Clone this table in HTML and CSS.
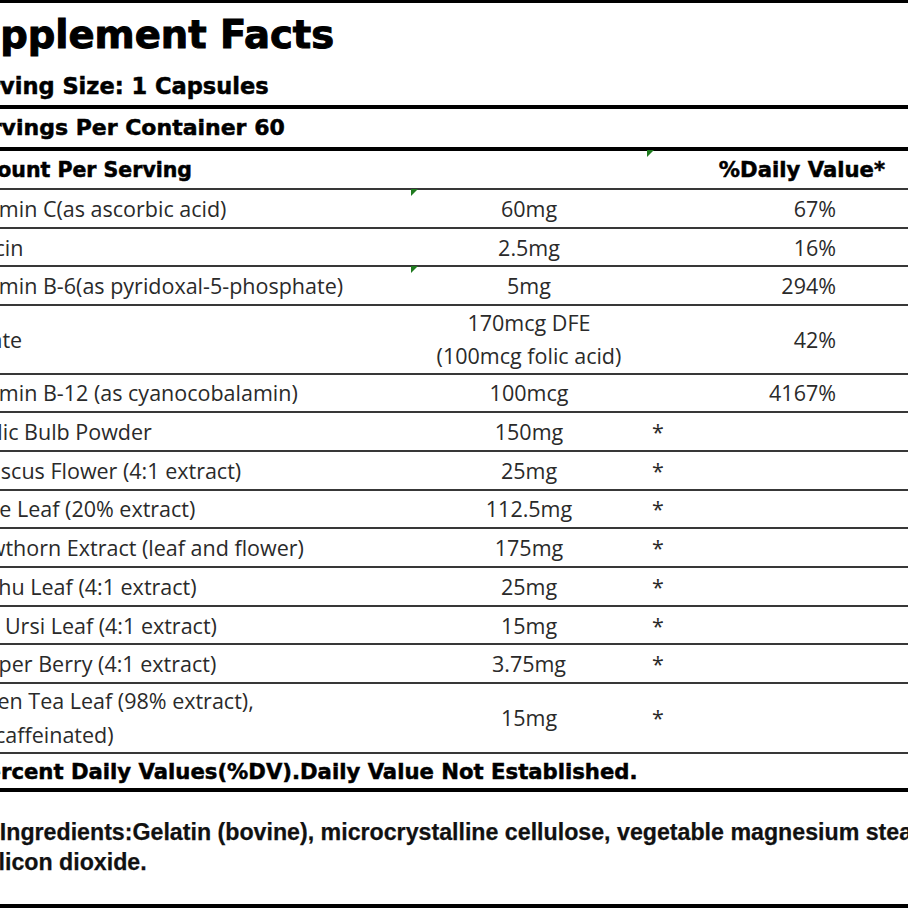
FILE: index.html
```html
<!DOCTYPE html>
<html lang="en">
<head>
<meta charset="utf-8">
<title>Supplement Facts</title>
<link rel="stylesheet" href="styles.css">
</head>
<body>
<div class="label">
  <div class="top">
    <h1 class="title">Supplement Facts</h1>
    <p class="serving">Serving Size: 1 Capsules</p>
  </div>
  <p class="servings">Servings Per Container 60</p>
  <div class="row head">
    <span class="name">Amount Per Serving</span>
    <span class="amt"></span>
    <span class="dvh"><i class="flag"></i>%Daily Value*</span>
  </div>
  <div class="row"><span class="name">Vitamin C(as ascorbic acid)</span><span class="amt"><i class="flag"></i>60mg</span><span class="dv">67%</span></div>
  <div class="row"><span class="name">Niacin</span><span class="amt">2.5mg</span><span class="dv">16%</span></div>
  <div class="row"><span class="name">Vitamin B-6(as pyridoxal-5-phosphate)</span><span class="amt"><i class="flag"></i>5mg</span><span class="dv">294%</span></div>
  <div class="row tall folate"><span class="name">Folate</span><span class="amt">170mcg DFE<br>(100mcg folic acid)</span><span class="dv">42%</span></div>
  <div class="row"><span class="name">Vitamin B-12 (as cyanocobalamin)</span><span class="amt">100mcg</span><span class="dv">4167%</span></div>
  <div class="row"><span class="name">Garlic Bulb Powder</span><span class="amt">150mg</span><span class="star">*</span></div>
  <div class="row"><span class="name">Hibiscus Flower (4:1 extract)</span><span class="amt">25mg</span><span class="star">*</span></div>
  <div class="row"><span class="name">Olive Leaf (20% extract)</span><span class="amt">112.5mg</span><span class="star">*</span></div>
  <div class="row"><span class="name">Hawthorn Extract (leaf and flower)</span><span class="amt">175mg</span><span class="star">*</span></div>
  <div class="row"><span class="name">Buchu Leaf (4:1 extract)</span><span class="amt">25mg</span><span class="star">*</span></div>
  <div class="row"><span class="name">Uva Ursi Leaf (4:1 extract)</span><span class="amt">15mg</span><span class="star">*</span></div>
  <div class="row"><span class="name">Juniper Berry (4:1 extract)</span><span class="amt">3.75mg</span><span class="star">*</span></div>
  <div class="row tall tea"><span class="name">Green Tea Leaf (98% extract),<br>(Decaffeinated)</span><span class="amt">15mg</span><span class="star">*</span></div>
  <p class="footnote">*Percent Daily Values(%DV).Daily Value Not Established.</p>
  <div class="ingredients">
    <p>Other Ingredients:Gelatin (bovine), microcrystalline cellulose, vegetable magnesium stearate and silicon dioxide.</p>
  </div>
</div>
</body>
</html>
```

FILE: styles.css
```css
html, body {
  margin: 0;
  padding: 0;
  background: #ffffff;
}

body {
  width: 908px;
  height: 908px;
  overflow: hidden;
}

.label {
  width: 990px;
  margin-left: -40px;
  border-top: 3px solid #000;
  border-bottom: 4px solid #000;
  font-family: "DejaVu Sans", "Liberation Sans", sans-serif;
  color: #000;
}

.top {
  padding: 10px 0 6px;
  border-bottom: 4px solid #000;
}

.title {
  margin: 0 0 0 -15px;
  font-size: 38.5px;
  line-height: 44px;
  font-weight: 700;
  -webkit-text-stroke: 1px #000;
}

.serving {
  margin: 16px 0 0 -2.5px;
  font-size: 22.5px;
  line-height: 26px;
  font-weight: 700;
  -webkit-text-stroke: 0.5px #000;
}

.servings {
  margin: 0;
  padding: 6px 0;
  font-size: 22px;
  line-height: 26px;
  font-weight: 700;
  border-bottom: 4px solid #000;
  -webkit-text-stroke: 0.5px #000;
}

.row {
  display: grid;
  grid-template-columns: 451px 236px 1fr;
  height: 36.7px;
  border-bottom: 2px solid #383838;
  font-family: "Open Sans", "Noto Sans", sans-serif;
  font-size: 21.5px;
  color: #2a2a2a;
}

.row > span {
  position: relative;
  display: flex;
  align-items: center;
}

.name {
  padding-left: 1px;
  white-space: nowrap;
}

.amt {
  justify-content: center;
  text-align: center;
}

.dv {
  justify-content: flex-end;
  padding-right: 114px;
}

.star {
  padding-left: 5px;
}

.tall.folate {
  height: 66.5px;
  line-height: 33px;
}

.tall.tea {
  height: 68px;
  line-height: 34px;
}

.row.head {
  height: 37px;
  font-family: "DejaVu Sans", "Liberation Sans", sans-serif;
  font-size: 20.5px;
  font-weight: 700;
  color: #000;
  -webkit-text-stroke: 0.5px #000;
}

.row.head > span {
  align-items: flex-start;
  padding-top: 6px;
  line-height: 26px;
}

.row.head .name {
  padding-left: 0;
}

.dvh {
  justify-content: flex-end;
  padding-right: 65px;
  font-size: 21.2px;
}

.flag {
  position: absolute;
  top: -1px;
  left: 0;
  width: 0;
  height: 0;
  border-top: 7px solid #1f7a1f;
  border right: 0;
  border-right: 7px solid transparent;
}

.footnote {
  margin: 0;
  height: 34px;
  font-size: 21.2px;
  line-height: 35px;
  font-weight: 700;
  white-space: nowrap;
  border-bottom: 4px solid #000;
  -webkit-text-stroke: 0.5px #000;
}

.ingredients {
  height: 112px;
  box-sizing: border-box;
  padding-top: 25px;
}

.ingredients p {
  margin: 0 0 0 -28.5px;
  width: 1045px;
  font-family: "Liberation Sans", Arial, sans-serif;
  font-size: 23.2px;
  line-height: 30px;
  font-weight: 700;
  color: #111;
  -webkit-text-stroke: 0.25px #111;
}
```
